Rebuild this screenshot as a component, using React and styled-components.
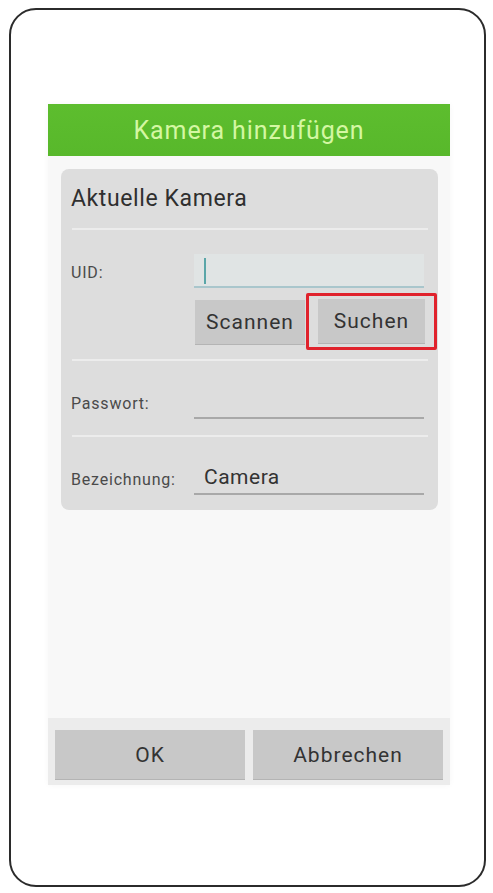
import React from "react";
import styled, { createGlobalStyle } from "styled-components";

const GlobalStyle = createGlobalStyle`
  html, body {
    margin: 0;
    padding: 0;
    background: #ffffff;
  }
  body {
    font-family: Roboto, "Noto Sans", "Liberation Sans", sans-serif;
  }
`;

const Phone = styled.div`
  box-sizing: border-box;
  margin: 8px 0 0 9px;
  width: 477px;
  height: 879px;
  border: 2px solid #2b2b2b;
  border-radius: 27px;
  padding: 94px 0 0 37px;
`;

const Dialog = styled.div`
  width: 402px;
  height: 681px;
  display: flex;
  flex-direction: column;
  background: #f8f8f8;
  box-shadow: 0 0 6px rgba(0, 0, 0, 0.04);
`;

const Header = styled.div`
  height: 52px;
  flex-shrink: 0;
  display: flex;
  align-items: center;
  justify-content: center;
  background: linear-gradient(180deg, #5dbd2e 0%, #58b82b 100%);
  color: #d4f7a2;
  font-size: 25px;
  letter-spacing: 0.9px;
`;

const Body = styled.div`
  flex: 1;
  padding: 13px 12px 0 13px;
`;

const Card = styled.div`
  background: #dddddd;
  border-radius: 8px;
  display: flex;
  flex-direction: column;
`;

const CardTitle = styled.div`
  height: 59px;
  display: flex;
  align-items: center;
  padding: 0 10px;
  font-size: 23px;
  letter-spacing: 0.6px;
  color: #2f2f2f;
`;

const Divider = styled.div`
  height: 2px;
  margin: 0 10px 0 11px;
  background: #ececec;
`;

const Section = styled.div`
  display: grid;
  grid-template-columns: 123px minmax(0, 1fr);
  align-items: center;
  row-gap: 5px;
  padding: ${(p) => p.pad || "24px 14px 16px 10px"};
`;

const Label = styled.div`
  font-size: 16px;
  letter-spacing: 0.8px;
  color: #4a4a4a;
  padding-top: 2px;
`;

const Input = styled.div`
  box-sizing: border-box;
  height: 34px;
  display: flex;
  align-items: center;
  padding: 0 10px;
  border-bottom: 2px solid ${(p) => (p.focused ? "#a9c6cc" : "#a8a8a8")};
  background: ${(p) => (p.focused ? "#e0e4e4" : "transparent")};
  font-size: 21px;
  letter-spacing: 0.5px;
  color: #333;
`;

const Caret = styled.span`
  display: block;
  width: 2px;
  height: 26px;
  margin-top: 2px;
  background: #5aa6a8;
`;

const ButtonRow = styled.div`
  grid-column: 2;
  display: flex;
  align-items: center;
  gap: 1px;
  margin-left: 1px;
`;

const Button = styled.div`
  box-sizing: border-box;
  flex-shrink: 0;
  width: ${(p) => p.w}px;
  height: ${(p) => p.h || 44}px;
  display: flex;
  align-items: center;
  justify-content: center;
  background: #c8c8c8;
  box-shadow: 0 1px 0 #b4b4b4;
  font-size: 21px;
  letter-spacing: 1px;
  color: #333;
`;

const Highlight = styled.div`
  box-sizing: border-box;
  flex-shrink: 0;
  width: 131px;
  height: 57px;
  padding: 3px 9px 0 9px;
  border: 3px solid #e0222c;
  border-radius: 2px;
`;

const Spacer = styled.div`
  flex: 1;
`;

const Footer = styled.div`
  height: 67px;
  flex-shrink: 0;
  display: flex;
  gap: 8px;
  padding: 12px 7px 0 7px;
  box-sizing: border-box;
  background: #ececec;
`;

export default function App() {
  return (
    <>
      <GlobalStyle />
      <Phone>
        <Dialog>
          <Header>Kamera hinzufügen</Header>
          <Body>
            <Card>
              <CardTitle>Aktuelle Kamera</CardTitle>
              <Divider />
              <Section pad="24px 14px 9px 10px">
                <Label>UID:</Label>
                <Input focused>
                  <Caret />
                </Input>
                <ButtonRow>
                  <Button w={110}>Scannen</Button>
                  <Highlight>
                    <Button w={107}>Suchen</Button>
                  </Highlight>
                </ButtonRow>
              </Section>
              <Divider />
              <Section>
                <Label>Passwort:</Label>
                <Input />
              </Section>
              <Divider />
              <Section pad="24px 14px 15px 10px">
                <Label>Bezeichnung:</Label>
                <Input>Camera</Input>
              </Section>
            </Card>
          </Body>
          <Spacer />
          <Footer>
            <Button w={190} h={49}>
              OK
            </Button>
            <Button w={190} h={49}>
              Abbrechen
            </Button>
          </Footer>
        </Dialog>
      </Phone>
    </>
  );
}
